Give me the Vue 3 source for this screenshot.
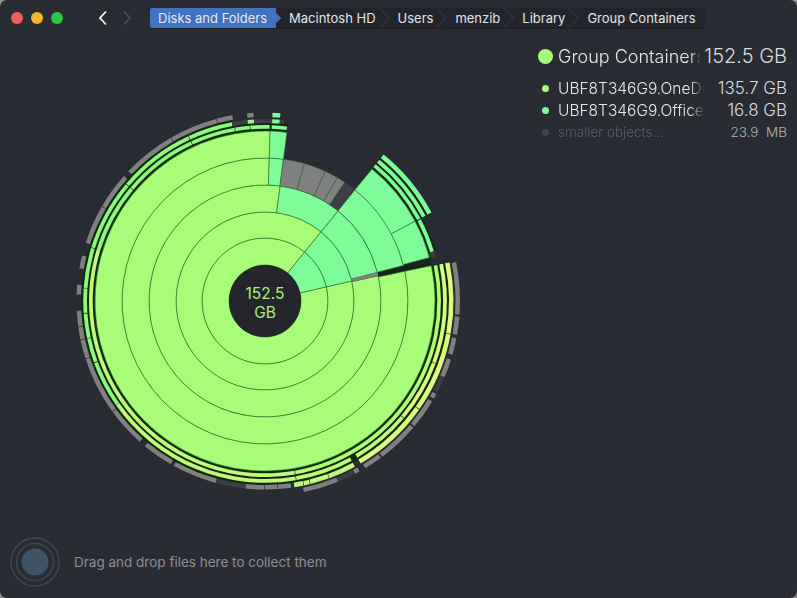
<template>
  <div class="window">
    <header class="titlebar">
      <div class="lights">
        <span class="light red"></span>
        <span class="light yellow"></span>
        <span class="light green"></span>
      </div>
      <nav class="arrows">
        <svg width="10" height="16" viewBox="0 0 10 16"><path d="M8 1.5 2 8l6 6.5" fill="none" stroke="#f2f3f5" stroke-width="1.8" /></svg>
        <svg width="10" height="16" viewBox="0 0 10 16"><path d="M2 1.5 8 8l-6 6.5" fill="none" stroke="#4c4f57" stroke-width="1.8" /></svg>
      </nav>
      <div class="crumbs">
        <span v-for="(c, i) in crumbs" :key="c" class="crumb" :class="{ active: i === 0 }"><span class="label">{{ c }}</span></span>
      </div>
    </header>

    <main class="body">
      <div class="chart">
        <svg width="530" height="493" viewBox="0 37 530 493">
          <path v-for="(s, i) in segments" :key="i" :d="s.d" :fill="s.fill" :stroke="s.stroke" :stroke-width="s.sw" />
          <circle :cx="cx" :cy="cy" r="36" fill="#24262b" />
        </svg>
        <div class="total">152.5<br />GB</div>
      </div>
      <aside class="legend">
        <div v-for="r in rows" :key="r.name" class="row" :class="r.cls">
          <span class="dot" :style="{ background: r.color }"></span>
          <span class="name">{{ r.name }}</span>
          <span class="size">{{ r.size }}</span>
        </div>
      </aside>
    </main>

    <footer class="dropzone">
      <svg width="50" height="50" viewBox="0 0 50 50">
        <circle cx="25" cy="25" r="24" fill="none" stroke="#42464e" stroke-width="1.4" />
        <circle cx="25" cy="25" r="18.5" fill="none" stroke="#42464e" stroke-width="1.4" />
        <circle cx="25" cy="25" r="13.5" fill="#3f5367" />
      </svg>
      <span>Drag and drop files here to collect them</span>
    </footer>
  </div>
</template>

<script setup>
const crumbs = ['Disks and Folders', 'Macintosh HD', 'Users', 'menzib', 'Library', 'Group Containers']

const rows = [
  { name: 'Group Containers', size: '152.5 GB', color: '#a4fb76', cls: 'big' },
  { name: 'UBF8T346G9.OneDriveSyncClientSuite', size: '135.7 GB', color: '#a4fb76', cls: '' },
  { name: 'UBF8T346G9.Office', size: '16.8 GB', color: '#7dfb9b', cls: '' },
  { name: 'smaller objects...', size: '23.9  MB', color: '#43454c', cls: 'dim' },
]

const cx = 265
const cy = 301

const LIME = '#a8fd78'
const TEAL = '#7efc9a'
const MINT = '#8cf87c'
const RING = '#aefb76'
const PALE = '#c2fa78'
const YEL = '#dcfb7e'
const GREY = '#808082'
const DGREY = '#3d3f45'
const DARK = '#0f2b0e'
const LINE = '#2a6e24'

function pt(r, a) {
  const t = (a * Math.PI) / 180
  return `${(cx + r * Math.sin(t)).toFixed(2)} ${(cy - r * Math.cos(t)).toFixed(2)}`
}

// angles are clockwise from 12 o'clock
function sector(r0, r1, a0, a1) {
  const big = a1 - a0 > 180 ? 1 : 0
  return `M${pt(r0, a0)}A${r0} ${r0} 0 ${big} 1 ${pt(r0, a1)}L${pt(r1, a1)}A${r1} ${r1} 0 ${big} 0 ${pt(r1, a0)}Z`
}

const segments = []
function add(r0, r1, a0, a1, fill, line) {
  segments.push({ d: sector(r0, r1, a0, a1), fill, stroke: line ? LINE : 'none', sw: line ? 0.6 : 0 })
}
// many small pieces in one ring
function run(r0, r1, fill, pieces) {
  for (const [a0, a1, f] of pieces) add(r0, r1, a0, a1, f || fill, false)
}

// dark gaps behind the thin outer rings
add(170, 178, 78, 361.7, DARK)
add(178, 184, 78, 349.5, DARK)
add(170, 178, 39, 73.6, DARK)
add(178, 184, 39, 62, DARK)
add(170, 178, 1.7, 7.4, DARK)
add(116, 171, 75.6, 78, '#15231c')

// inner disc
add(36, 63, 77, 399, LIME, true)
add(63, 89, 77, 399, LIME, true)
add(89, 116, 77.5, 367.5, LIME, true)
add(116, 143, 78, 361.7, LIME, true)
add(143, 170, 78, 361.7, LIME, true)

// teal folder
add(36, 63, 39, 77, TEAL, true)
add(63, 89, 39, 77, TEAL, true)
add(89, 116, 39, 75.7, TEAL, true)
add(89, 116, 75.7, 77.5, GREY)
add(89, 116, 7.5, 39, TEAL, true)
add(116, 143, 39, 75.6, TEAL, true)
add(143, 170, 39, 62, TEAL, true)
add(143, 170, 62, 75.2, TEAL, true)
add(116, 143, 1.7, 7.4, TEAL, true)
add(143, 170, 1.7, 7.4, TEAL, true)

// grey wedge above the teal folder
add(116, 143, 7.4, 16, GREY, true)
add(116, 143, 16, 25, GREY, true)
add(116, 143, 25, 30.4, GREY, true)
add(116, 143, 30.4, 33.9, GREY, true)
add(116, 143, 33.9, 38.8, DGREY)

// ring 1
run(172.3, 176, MINT, [
  [287, 310], [310.2, 335], [335.2, 350], [350.2, 355], [355.2, 361.5],
  [2.2, 7.2, TEAL],
  [39, 62, TEAL], [62.3, 73.6, TEAL], [73.6, 75.5, DGREY],
  [78.2, 170, RING], [170.2, 287, PALE],
])

// ring 2
run(178, 181.8, MINT, [
  [235, 250], [250.2, 258], [258.2, 266], [266.2, 274], [274.2, 287], [287.2, 310], [310.2, 335], [335.2, 349.5],
  [349.5, 354.5, DGREY], [354.5, 356.5], [356.5, 362.3, DGREY],
  [2.3, 4.7, TEAL], [4.7, 6, DGREY],
  [39, 62, TEAL],
  [78.2, 110, YEL], [110.2, 130, YEL], [130.2, 149.5, PALE], [151.5, 170, PALE], [170.2, 235, PALE],
])

// ring 3
run(184, 188.5, GREY, [
  [78.2, 100, YEL], [100.2, 125, YEL], [125.2, 149.5, YEL], [151.5, 160, PALE], [160.2, 166, PALE], [166.2, 168, PALE], [168.2, 171, PALE],
  [172, 176], [176.2, 180], [180.2, 186], [186, 195, DGREY], [195.2, 209], [210, 219.6], [221.7, 234], [234.2, 252], [252.2, 258],
  [258.2, 262], [262.2, 267], [272, 275], [280, 284], [288, 300], [300.2, 311.5], [313.5, 330], [330.2, 345], [345.2, 350],
  [354.5, 356.5], [2.3, 4.7, TEAL], [39, 62, TEAL],
])

// ring 4, only on the right
run(190.5, 195, GREY, [
  [78.5, 94], [94.6, 100], [101, 106], [107.5, 113], [113, 118, DGREY], [118.5, 120], [121, 130], [130.5, 143],
  [143.5, 149], [151, 152.5], [152.5, 158, DGREY], [158, 168.5],
])
</script>

<style>
html, body { background: #8d8d90; }
</style>

<style scoped>
.window {
  width: 797px;
  height: 598px;
  display: flex;
  flex-direction: column;
  background: #2a2c33;
  border-radius: 7px;
  overflow: hidden;
  font-family: Inter, "Liberation Sans", sans-serif;
  color: #e6e8ec;
}
.titlebar {
  height: 37px;
  flex: none;
  display: flex;
  align-items: flex-start;
  padding: 8px 0 0 11px;
  box-sizing: border-box;
}
.lights { display: flex; gap: 8px; padding-top: 4px; }
.light { width: 12px; height: 12px; border-radius: 50%; }
.red { background: #ee5f5b; }
.yellow { background: #f5b62f; }
.green { background: #2dc840; }
.arrows { display: flex; gap: 14px; margin-left: 35px; padding-top: 2px; }
.crumbs {
  display: flex;
  margin-left: 18px;
  height: 21px;
  background: #22252c;
  border-bottom: 1px solid #1d2026;
  box-sizing: border-box;
  overflow: hidden;
  border-radius: 2px;
}
.crumb {
  position: relative;
  padding: 0 9px 0 13px;
  font-size: 13px;
  line-height: 20px;
  white-space: nowrap;
  color: #e3e6ea;
}
.crumb:first-child { padding-left: 8px; }
.label { position: relative; z-index: 2; }
.crumb::after {
  content: "";
  position: absolute;
  top: 3px;
  right: -2px;
  width: 14px;
  height: 14px;
  transform: rotate(45deg);
  border-top: 1px solid #34373f;
  border-right: 1px solid #34373f;
  background: inherit;
  box-sizing: border-box;
  z-index: 1;
}
.crumb:last-child::after { display: none; }
.crumb.active { background: #3f72bf; color: #e4ecf7; }
.crumb.active::after { border-color: #3f72bf; }
.body { flex: 1; display: flex; min-height: 0; }
.chart { width: 530px; flex: none; position: relative; }
.chart svg { display: block; }
.total {
  position: absolute;
  left: 229px;
  top: 247px;
  width: 72px;
  text-align: center;
  font-size: 15.5px;
  line-height: 19px;
  color: #a8f27c;
}
.legend { flex: 1; padding: 6px 10px 0 8px; }
.row {
  display: grid;
  grid-template-columns: 20px 146px 1fr;
  align-items: center;
  height: 22px;
  font-size: 15.5px;
  font-weight: 300;
}
.row.big { height: 26px; margin-bottom: 8px; font-size: 18px; }
.dot { width: 7px; height: 7px; border-radius: 50%; margin-left: 4px; }
.big .dot { width: 15px; height: 15px; margin-left: 0; }
.name {
  white-space: nowrap;
  overflow: hidden;
  -webkit-mask-image: linear-gradient(to right, #000 132px, transparent 146px);
  mask-image: linear-gradient(to right, #000 132px, transparent 146px);
}
.big .name {
  -webkit-mask-image: linear-gradient(to right, #000 132px, transparent 143px);
  mask-image: linear-gradient(to right, #000 132px, transparent 143px);
}
.size { text-align: right; white-space: pre; color: #d9dce1; font-size: 17px; }
.big .size { font-size: 20px; }
.dim .name { font-size: 13.5px; color: #5b5e66; }
.dim .size { font-size: 13.5px; color: #aeb1b7; }
.dropzone {
  height: 68px;
  flex: none;
  display: flex;
  align-items: center;
  gap: 14px;
  padding: 0 0 4px 10px;
  box-sizing: border-box;
  font-size: 13.5px;
  color: #8a8e9a;
}
</style>
